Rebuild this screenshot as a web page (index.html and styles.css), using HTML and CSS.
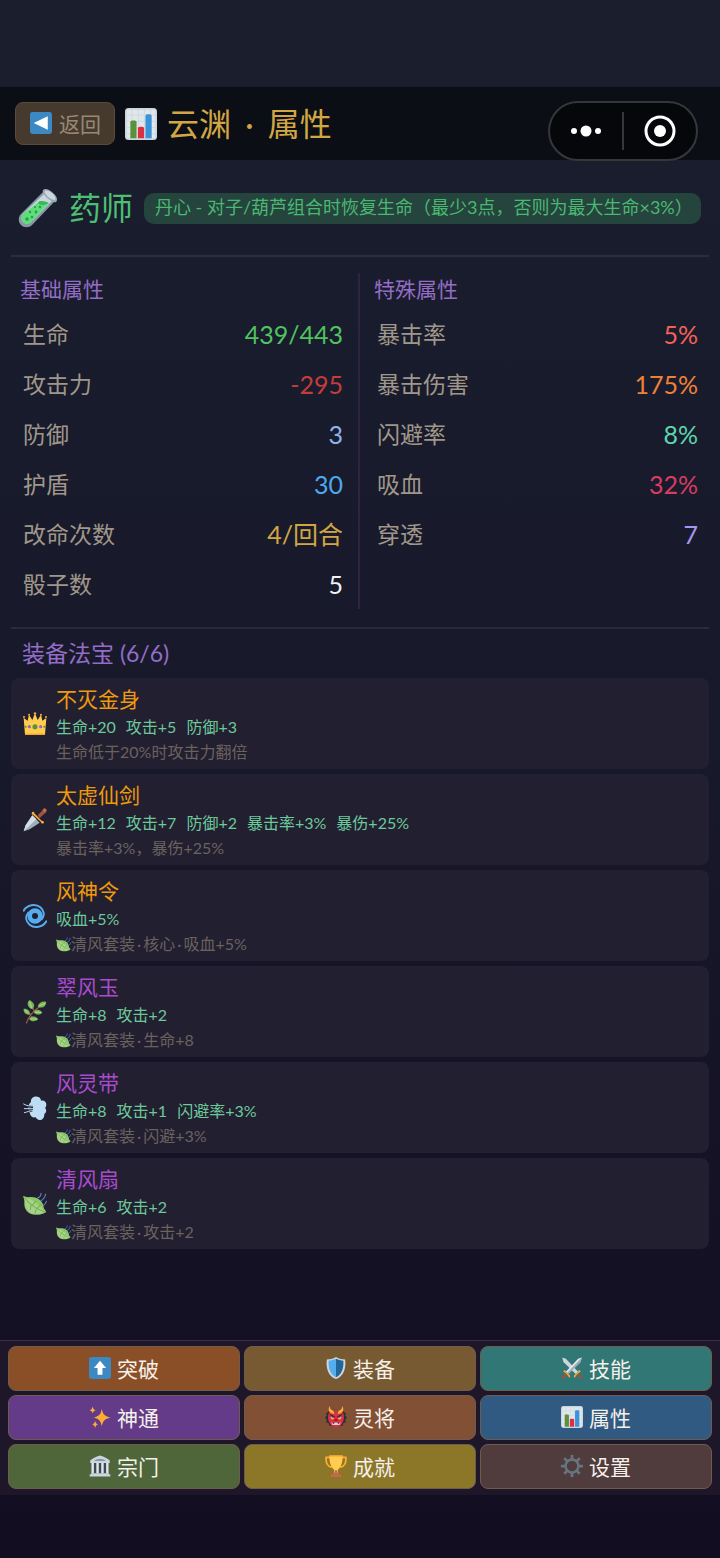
FILE: index.html
```html
<!DOCTYPE html>
<html lang="zh-CN">

<head>
<meta charset="utf-8">
<meta name="viewport" content="width=device-width, initial-scale=1">
<title>云渊 · 属性</title>
<link rel="stylesheet" href="styles.css">
</head>

<body>

<!-- shared icons -->
<svg class="sprite" aria-hidden="true">
<symbol id="chart" viewBox="0 0 36 36">
<rect width="36" height="36" rx="4" fill="#ccd6dd"/>
<path d="M2 2h32v32H2z" fill="#e1e8ed"/>
<path d="M0 8h36M0 15h36M0 22h36M0 29h36M8 0v36M15 0v36M22 0v36M29 0v36" stroke="#ccd6dd" stroke-width="1" fill="none"/>
<path d="M13 34H6V16a2 2 0 0 1 2-2h3a2 2 0 0 1 2 2z" fill="#5c913b"/>
<path d="M30 34h-7V9a2 2 0 0 1 2-2h3a2 2 0 0 1 2 2z" fill="#3b94d9"/>
<path d="M21.500 34h-7V23a2 2 0 0 1 2-2h3a2 2 0 0 1 2 2z" fill="#dd2e44"/>
</symbol>
<symbol id="leaf" viewBox="0 0 36 36">
<path d="M0 6c3 0 5 2 8 2 13-2 22 5 23 15 0 3 3 4 4 7-5 3-11 5-18 4C7 33 1 26 2 15c0-4-1-6-2-9z" fill="#8cc768"/>
<path d="M3 9c4 0 8 1 12 4 8 5 12 10 18 17-5 3-11 3-16 3C9 31 4 26 3 16z" fill="#a6d388"/>
<path d="M3 9c6 9 16 16 30 21M12 19l-1 8M20 25l-2 7M14 20l6-7M21 25l6-6" stroke="#77b255" stroke-width="1.600" fill="none"/>
<path d="M27 2c0 3-2 6-5 7M34 3c-1 5-3 8-7 10M35 14c-1 3-2 5-4 6" stroke="#5d8cd0" stroke-width="1.600" stroke-linecap="round" fill="none"/>
</symbol>
</svg>

<header class="topbar">
<button class="back" type="button">
<svg class="back-icon" viewBox="0 0 36 36" aria-hidden="true"><rect width="36" height="36" rx="4" fill="#3b88c3"/><path d="M29 7v22L6 18z" fill="#fff"/></svg>
返回</button>
<h1 class="title"><svg class="title-icon" aria-hidden="true"><use href="#chart"/></svg><span>云渊 <span class="title-dot">·</span> 属性</span></h1>
<div class="capsule">
<button class="capsule-btn" type="button" aria-label="更多">
<svg width="32" height="12" viewBox="0 0 32 12"><circle cx="4" cy="6" r="3" fill="#fff"/><circle cx="16" cy="6" r="5.500" fill="#fff"/><circle cx="28" cy="6" r="3" fill="#fff"/></svg>
</button>
<button class="capsule-btn" type="button" aria-label="关闭">
<svg width="32" height="32" viewBox="0 0 32 32"><circle cx="16" cy="16" r="14" fill="none" stroke="#fff" stroke-width="3"/><circle cx="16" cy="16" r="6" fill="#fff"/></svg>
</button>
</div>
</header>

<main class="content">

<section class="role">
<svg class="role-icon" viewBox="0 0 40 40" aria-hidden="true">
<path d="M26 3 37 13 14 37c-3 3-8 3-11 0s-3-8 0-11z" fill="#8899a6"/>
<path d="M26 6l8 7-21 21c-2 2-6 2-8 0s-2-6 0-8z" fill="#ccd6dd"/>
<path d="M22 13c4 2 6 2 9 2L13 34c-2 2-6 2-8 0s-2-6 0-8z" fill="#5cdf79"/>
<path d="M20 15c1-3 7-2 11 0-3 2-9 3-11 0z" fill="#39b85a"/>
<path d="M25 2c2-2 6-1 10 3 4 3 5 7 3 9-2 1-5-1-9-4-3-3-5-6-4-8z" fill="#99aab5"/>
<path d="M27 3c2-1 4 0 7 2 3 3 4 5 3 7-2 0-4-1-7-3-2-3-4-4-3-6z" fill="#ccd6dd"/>
<g fill="#2b9b49"><circle cx="9" cy="31" r="1.700"/><circle cx="14" cy="29" r="1.200"/><circle cx="12" cy="24" r="1.200"/><circle cx="18" cy="24" r="1.400"/><circle cx="17" cy="19" r="1"/><circle cx="22" cy="19" r="1.200"/></g>
</svg>
<h2 class="role-name">药师</h2>
<span class="role-skill">丹心 - 对子/葫芦组合时恢复生命（最少3点，否则为最大生命×3%）</span>
</section>

<section class="attrs">
<div class="attr-col">
<h3 class="attr-title" id="base">基础属性</h3>
<table class="attr-table" aria-labelledby="base">
<tr><th>生命</th><td class="hp">439/443</td></tr>
<tr><th>攻击力</th><td class="atk">-295</td></tr>
<tr><th>防御</th><td class="def">3</td></tr>
<tr><th>护盾</th><td class="shield">30</td></tr>
<tr><th>改命次数</th><td class="reroll">4/回合</td></tr>
<tr><th>骰子数</th><td class="dice">5</td></tr>
</table>
</div>
<div class="attr-col">
<h3 class="attr-title" id="special">特殊属性</h3>
<table class="attr-table" aria-labelledby="special">
<tr><th>暴击率</th><td class="crit">5%</td></tr>
<tr><th>暴击伤害</th><td class="critdmg">175%</td></tr>
<tr><th>闪避率</th><td class="dodge">8%</td></tr>
<tr><th>吸血</th><td class="leech">32%</td></tr>
<tr><th>穿透</th><td class="pierce">7</td></tr>
</table>
</div>
</section>

<section class="equip">
<h3 class="equip-title">装备法宝 (6/6)</h3>
<ul class="equip-list">

<li class="item gold">
<svg class="item-icon" viewBox="0 0 36 36" aria-hidden="true">
<path d="M3 34 1 9l6 4 2-9 5 8 4-10 4 10 5-8 2 9 6-4-2 25z" fill="#ffcc4d"/>
<g fill="#ffac33"><circle cx="1.500" cy="7.500" r="1.500"/><circle cx="9" cy="4" r="1.500"/><circle cx="18" cy="2" r="1.800"/><circle cx="27" cy="4" r="1.500"/><circle cx="34.500" cy="7.500" r="1.500"/><path d="M3 32h30v2H3z"/></g>
<g fill="#9266cc"><circle cx="9.500" cy="22" r="2.400"/><circle cx="26.500" cy="22" r="2.400"/></g>
<circle cx="18" cy="22" r="3.800" fill="#5c913b"/><circle cx="4" cy="22" r="1.500" fill="#5c913b"/><circle cx="32" cy="22" r="1.500" fill="#5c913b"/>
</svg>
<div class="item-body">
<h4 class="item-name">不灭金身</h4>
<p class="item-stats"><span>生命+20</span><span>攻击+5</span><span>防御+3</span></p>
<p class="item-desc">生命低于20%时攻击力翻倍</p>
</div>
</li>

<li class="item gold">
<svg class="item-icon" viewBox="0 0 36 36" aria-hidden="true">
<path d="M14 11 25 22 10 32 1 35 4 26z" fill="#9fb0bc"/>
<path d="M14 11 20 17 1 35 4 26z" fill="#d5dee4"/>
<path d="M22 11 31 2l4 4-10 9z" fill="#a0523c"/>
<path d="M31 1c2-2 6 2 4 4l-2 2-4-4z" fill="#c1694f"/>
<path d="M14 6c2-1 3 0 3 2l11 11c3 0 4 2 3 4-2 1-4 0-4-2L15 10c-2 0-3-2-1-4z" fill="#ffac33"/>
</svg>
<div class="item-body">
<h4 class="item-name">太虚仙剑</h4>
<p class="item-stats"><span>生命+12</span><span>攻击+7</span><span>防御+2</span><span>暴击率+3%</span><span>暴伤+25%</span></p>
<p class="item-desc">暴击率+3%，暴伤+25%</p>
</div>
</li>

<li class="item gold">
<svg class="item-icon" viewBox="0 0 36 36" aria-hidden="true">
<g fill="none" stroke="#55acee" stroke-linecap="round">
<circle cx="18" cy="18" r="8" stroke-width="7"/>
<path d="M1 10C6 1 19-1 26 5c6 5 7 12 2 18" stroke-width="3"/>
<path d="M35 26C30 35 17 37 10 31 4 26 3 19 8 13" stroke-width="3"/>
</g>
</svg>
<div class="item-body">
<h4 class="item-name">风神令</h4>
<p class="item-stats"><span>吸血+5%</span></p>
<p class="item-desc"><svg class="leaf" aria-hidden="true"><use href="#leaf"/></svg>清风套装<span class="dot">·</span>核心<span class="dot">·</span>吸血+5%</p>
</div>
</li>

<li class="item purple">
<svg class="item-icon" viewBox="0 0 36 36" aria-hidden="true">
<path d="M5 35C9 24 17 14 29 8M13 22 8 20M17 17l-3-6M12 25l9 4M18 17l8 1" stroke="#a0614d" stroke-width="1.800" fill="none"/>
<g fill="#77b255"><path d="M14 14C6 11 5 4 10 0c7 4 9 9 4 14zM22 10c2-7 8-9 13-7-1 8-6 10-13 7zM10 22c-6 1-10-3-9-9 7 0 10 3 9 9zM16 18c4-5 10-4 13 1-4 4-10 4-13-1zM9 28c5-5 11-4 14 1-5 4-11 4-14-1z"/></g>
<path d="M10 3l3 9M24 9l9-4M3 15l5 5M18 18l9 1M11 28l10 1" stroke="#a6d388" stroke-width="2" fill="none"/>
</svg>
<div class="item-body">
<h4 class="item-name">翠风玉</h4>
<p class="item-stats"><span>生命+8</span><span>攻击+2</span></p>
<p class="item-desc"><svg class="leaf" aria-hidden="true"><use href="#leaf"/></svg>清风套装<span class="dot">·</span>生命+8</p>
</div>
</li>

<li class="item purple">
<svg class="item-icon" viewBox="0 0 36 36" aria-hidden="true">
<path d="M12 9c-1-5 4-9 9-8 4 0 6 3 6 6 5-1 8 2 8 6 0 2-1 4-2 5 3 3 2 7-1 9 0 6-3 9-7 9-3 0-5-2-6-4-5 1-8-2-9-7-3-4-3-12 2-16z" fill="#bdddf4"/>
<path d="M1 13c5 3 9 3 14 3M2 19h13M2 25c5-1 8-3 12-3" stroke="#221f31" stroke-width="3" fill="none"/>
<path d="M1 12c5 3 9 3 14 3M2 19h13M2 25c5-1 8-3 12-3" stroke="#bdddf4" stroke-width="1.500" stroke-linecap="round" fill="none"/>
</svg>
<div class="item-body">
<h4 class="item-name">风灵带</h4>
<p class="item-stats"><span>生命+8</span><span>攻击+1</span><span>闪避率+3%</span></p>
<p class="item-desc"><svg class="leaf" aria-hidden="true"><use href="#leaf"/></svg>清风套装<span class="dot">·</span>闪避+3%</p>
</div>
</li>

<li class="item purple">
<svg class="item-icon" aria-hidden="true"><use href="#leaf"/></svg>
<div class="item-body">
<h4 class="item-name">清风扇</h4>
<p class="item-stats"><span>生命+6</span><span>攻击+2</span></p>
<p class="item-desc"><svg class="leaf" aria-hidden="true"><use href="#leaf"/></svg>清风套装<span class="dot">·</span>攻击+2</p>
</div>
</li>

</ul>
</section>
</main>

<nav class="menu">
<button class="menu-btn tupo" type="button"><svg class="menu-icon" viewBox="0 0 36 36" aria-hidden="true"><rect width="36" height="36" rx="4" fill="#3b88c3"/><path d="M18 6 28 18h-6v11h-8V18H8z" fill="#fff"/></svg>突破</button>
<button class="menu-btn zhuangbei" type="button"><svg class="menu-icon" viewBox="0 0 36 36" aria-hidden="true"><path d="M18 0c5 3 10 4 15 4 2 15-3 28-15 32C6 32 1 19 3 4c5 0 10-1 15-4z" fill="#ccd6dd"/><path d="M18 3c4 2 8 3 12 3 1 13-3 23-12 27z" fill="#226699"/><path d="M18 3c-4 2-8 3-12 3-1 13 3 23 12 27z" fill="#55acee"/></svg>装备</button>
<button class="menu-btn jineng" type="button"><svg class="menu-icon" viewBox="0 0 36 36" aria-hidden="true">
<path d="M2 1l6 2 20 21-4 4L4 8z" fill="#ccd6dd"/><path d="M34 1l-6 2L8 24l4 4L32 8z" fill="#e1e8ed"/><path d="M34 1 10 26l2 2L32 8z" fill="#99aab5"/>
<path d="M5 22c-2 1-1 3 1 3l6 6c0 3 3 3 3 1s-1-3-2-3l-5-5c0-2-2-3-3-2zM31 22c2 1 1 3-1 3l-6 6c0 3-3 3-3 1s1-3 2-3l5-5c0-2 2-3 3-2z" fill="#ffac33"/>
<path d="M7 27l3 3-6 5c-2 1-4-1-3-3zM29 27l-3 3 6 5c2 1 4-1 3-3z" fill="#a0523c"/></svg>技能</button>
<button class="menu-btn shentong" type="button"><svg class="menu-icon" viewBox="0 0 36 36" aria-hidden="true"><path d="M21 5c2 9 4 11 14 14-10 3-12 5-14 14-2-9-4-11-13-14 9-3 11-5 13-14zM6 1c1 4 2 5 5 6-3 1-4 2-5 5C5 9 4 8 1 7c3-1 4-2 5-6zM10 24c1 4 2 5 5 6-3 1-4 2-5 6-1-4-2-5-5-6 3-1 4-2 5-6z" fill="#ffac33"/></svg>神通</button>
<button class="menu-btn lingjiang" type="button"><svg class="menu-icon" viewBox="0 0 36 36" aria-hidden="true">
<path d="M6 9 2 12l1 4-3 3 3 4-1 4 4 1 1 4 5 1h12l5-1 1-4 4-1-1-4 3-4-3-3 1-4-4-3z" fill="#292f33"/>
<path d="M6 12c7-5 17-5 24 0 2 7 1 13-3 18-2 6-16 6-18 0-4-5-5-11-3-18z" fill="#dd2e44"/>
<path d="M8 0C4 6 6 12 15 13c0-4-1-5-3-6-3-1-4-3-4-7zM28 0c4 6 2 12-7 13 0-4 1-5 3-6 3-1 4-3 4-7z" fill="#ffac33"/>
<path d="M8 14l8 4M28 14l-8 4" stroke="#292f33" stroke-width="2"/>
<path d="M9 18l6 2-2 2c-2 0-4-1-4-4zM27 18l-6 2 2 2c2 0 4-1 4-4z" fill="#a6d388"/>
<path d="M18 20l3 4h-6z" fill="#a0041e"/><path d="M11 27h14c0 5-14 5-14 0z" fill="#5c1420"/><path d="M11 25l2 4h2v-2h6v2h2l2-4v5l-2 1H13l-2-1z" fill="#f0c9c4"/></svg>灵将</button>
<button class="menu-btn shuxing" type="button"><svg class="menu-icon" aria-hidden="true"><use href="#chart"/></svg>属性</button>
<button class="menu-btn zongmen" type="button"><svg class="menu-icon" viewBox="0 0 36 36" aria-hidden="true"><path d="M4 12h28v19H4z" fill="#3d4a55"/><path d="M18 1c7 2 12 5 16 8v4H2V9c4-3 9-6 16-8zM3 30h30v2H3zM1 32h34v3H1z" fill="#ccd6dd"/><path d="M8 10c6-5 14-5 20 0z" fill="#8899a6"/><path d="M4 13h4v17H4zM12 13h4v17h-4zM20 13h4v17h-4zM28 13h4v17h-4z" fill="#e1e8ed"/></svg>宗门</button>
<button class="menu-btn chengjiu" type="button"><svg class="menu-icon" viewBox="0 0 36 36" aria-hidden="true"><path d="M8 4H2c-1 8 2 15 9 16M28 4h6c1 8-2 15-9 16" fill="none" stroke="#ffac33" stroke-width="3"/><path d="M7 1h22c0 12-3 20-8 23v6h-6v-6C10 21 7 13 7 1z" fill="#ffcc4d"/><path d="M9 36c0-4 3-6 7-7v-4h4v4c4 1 7 3 7 7z" fill="#c1694f"/><path d="M7 1h22v2H7z" fill="#ffac33"/></svg>成就</button>
<button class="menu-btn shezhi" type="button"><svg class="menu-icon" viewBox="0 0 36 36" aria-hidden="true"><circle cx="18" cy="18" r="10.500" fill="none" stroke="#66757f" stroke-width="4"/><path d="M18 0v7M18 29v7M0 18h7M29 18h7M5.300 5.300l5 5M25.700 25.700l5 5M5.300 30.700l5-5M25.700 10.300l5-5" stroke="#66757f" stroke-width="4.500"/></svg>设置</button>
</nav>

</body>

</html>
```
FILE: styles.css
```css
* {
	box-sizing: border-box;
}
body {
	display: flex;
	flex-direction: column;
	min-height: 100vh;
	margin: 0;
	padding: 87px 0 63px;
	font-family: Lato, "Noto Sans CJK SC", sans-serif;
	color: #a0978a;
	background: linear-gradient(180deg, #1a1e2d 0%, #181a2b 40%, #120d20 100%);
}
h1, h2, h3, h4, p, ul {
	margin: 0;
	padding: 0;
	font-weight: 400;
}
button {
	font-family: inherit;
	cursor: pointer;
}
svg {
	flex: none;
}
.sprite {
	position: absolute;
	width: 0;
	height: 0;
}

/* top bar */
.topbar {
	position: relative;
	display: flex;
	align-items: center;
	gap: 10px;
	height: 73px;
	padding: 0 15px;
	background: #0b0e15;
}
.back {
	display: flex;
	align-items: center;
	gap: 7px;
	height: 43px;
	padding: 0 13px 2px 14px;
	font-size: 21px;
	color: #978975;
	background: #463a2f;
	border: 1px solid #5c4936;
	border-radius: 8px;
}
.back-icon {
	width: 22px;
	height: 22px;
}
.title {
	display: flex;
	align-items: center;
	gap: 10px;
	font-size: 32px;
	line-height: 44px;
	color: #d2a743;
}
.title-icon {
	width: 32px;
	height: 32px;
}
.title-dot {
	padding: 0 6px;
}
/* floats over the bar and the page */
.capsule {
	position: absolute;
	top: 14px;
	right: 22px;
	display: flex;
	align-items: center;
	width: 150px;
	height: 60px;
	background: #05070b;
	border: 2px solid #36373b;
	border-radius: 30px;
}
.capsule-btn {
	display: flex;
	flex: 1;
	align-items: center;
	justify-content: center;
	height: 38px;
	padding: 0;
	background: none;
	border: 0;
}
.capsule-btn + .capsule-btn {
	border-left: 2px solid #36373b;
}

/* role */
.content {
	padding: 0 11px;
}
.role {
	display: flex;
	align-items: center;
	gap: 11px;
	padding: 28px 7px 27px;
	border-bottom: 2px solid #2b2c3c;
}
.role-icon {
	width: 40px;
	height: 40px;
}
.role-name {
	font-size: 32px;
	line-height: 40px;
	white-space: nowrap;
	color: #4cbf73;
}
.role-skill {
	padding: 0 8px 2px 11px;
	font-size: 18px;
	line-height: 29px;
	white-space: nowrap;
	color: #4ab871;
	background: #25443e;
	border-radius: 10px;
}

/* attributes */
.attrs {
	display: grid;
	grid-template-columns: 1fr 1fr;
	padding: 16px 0 18px;
	border-bottom: 2px solid #2b293a;
}
.attr-col {
	padding: 0 8px 0 14px;
}
.attr-col:first-child {
	padding: 0 12px 0 9px;
	border-right: 2px solid #2d2440;
}
.attr-title {
	margin-bottom: 4px;
	font-size: 21px;
	line-height: 32px;
	color: #946dc6;
}
.attr-table {
	width: 100%;
	border-collapse: collapse;
}
.attr-table th, .attr-table td {
	height: 50px;
	padding: 0 3px;
	line-height: 40px;
}
.attr-table th {
	font-size: 23px;
	font-weight: 400;
	text-align: left;
}
.attr-table td {
	font-size: 25px;
	text-align: right;
}
.hp { color: #4fc35f; }
.atk { color: #c43c3c; }
.def { color: #8db4e8; }
.shield { color: #4fa8ee; }
.reroll { color: #d2a743; }
.dice { color: #f2f2f2; }
.crit { color: #f4605a; }
.critdmg { color: #f08038; }
.dodge { color: #5cd6ae; }
.leech { color: #d63b62; }
.pierce { color: #a596f0; }

/* equipment */
.equip-title {
	padding: 6px 11px 7px;
	font-size: 23px;
	line-height: 36px;
	color: #946dc6;
}
.equip-list {
	display: flex;
	flex-direction: column;
	gap: 5px;
	list-style: none;
}
.item {
	display: flex;
	align-items: center;
	gap: 9px;
	padding: 6px 12px 5px;
	background: #221f31;
	border-radius: 8px;
}
.item-icon {
	width: 24px;
	height: 24px;
}
.item-name {
	font-size: 21px;
	line-height: 29px;
}
.gold .item-name { color: #ee9a0c; }
.purple .item-name { color: #a84ccf; }
.item-stats {
	display: flex;
	flex-wrap: wrap;
	gap: 0 10px;
	font-size: 16px;
	line-height: 27px;
	color: #6cc99a;
}
.item-desc {
	display: flex;
	align-items: center;
	font-size: 16px;
	line-height: 24px;
	color: #6a625d;
}
.leaf {
	width: 15px;
	height: 15px;
}
.dot {
	padding: 0 2px;
}

/* bottom menu */
.menu {
	display: grid;
	grid-template-columns: repeat(3, 1fr);
	gap: 4px;
	margin-top: auto;
	padding: 5px 8px 6px;
	background: #1e172a;
	border-top: 1px solid #393147;
}
.menu-btn {
	display: flex;
	align-items: center;
	justify-content: center;
	gap: 6px;
	height: 45px;
	padding: 0 0 2px;
	font-size: 21px;
	color: #f5f0ea;
	border: 1px solid #6f5c4c;
	border-radius: 8px;
}
.menu-icon {
	width: 22px;
	height: 22px;
}
.tupo { background: #8b4f28; }
.zhuangbei { background: #775a31; }
.jineng { background: #317775; }
.shentong { background: #633b88; }
.lingjiang { background: #825035; }
.shuxing { background: #315a83; }
.zongmen { background: #4f663a; }
.chengjiu { background: #8c7728; }
.shezhi { background: #503b3d; }
```
